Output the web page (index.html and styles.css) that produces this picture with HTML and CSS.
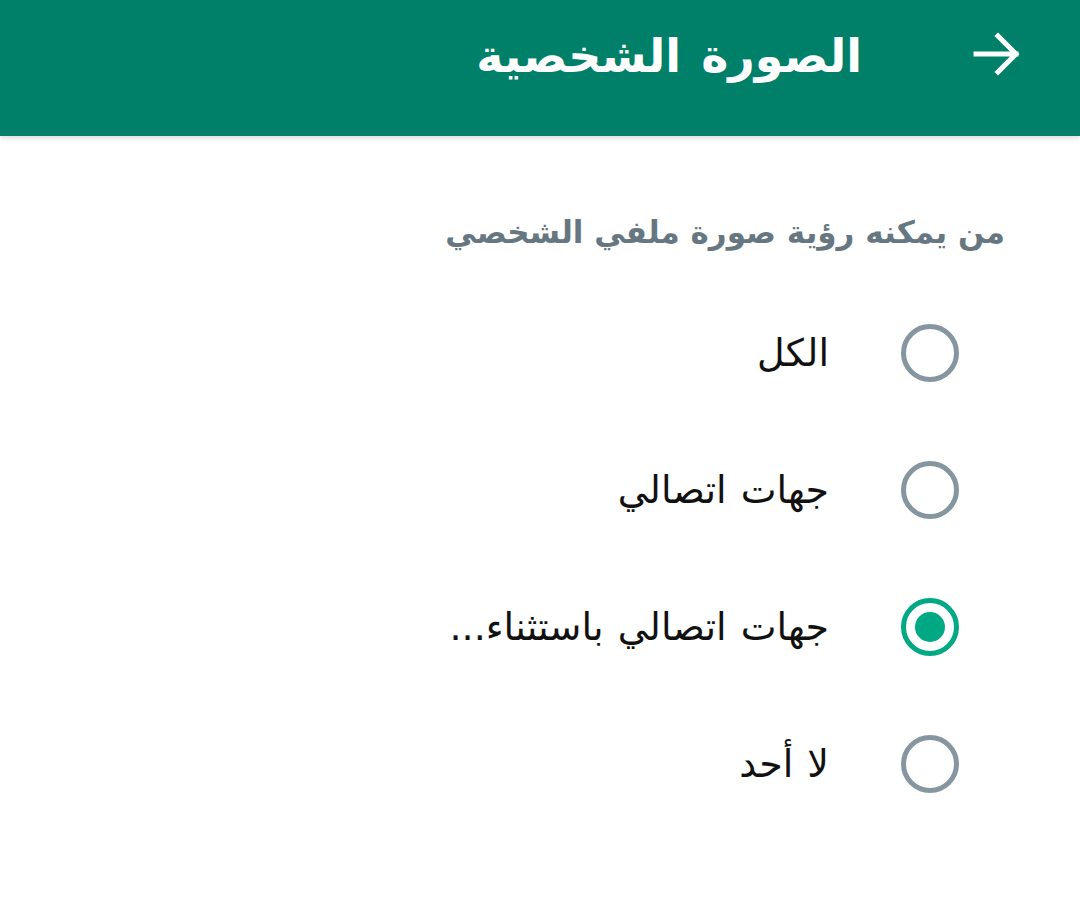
FILE: index.html
```html
<!DOCTYPE html>
<html lang="ar" dir="rtl">
<head>
<meta charset="utf-8">
<link rel="stylesheet" href="styles.css">
</head>
<body>
<header class="bar">
  <svg class="back" viewBox="0 0 48 48" width="48" height="48">
    <path d="M4 24 H44 M26 6 L44 24 L26 42" fill="none" stroke="#fff" stroke-width="5" stroke-linecap="square"/>
  </svg>
  <h1 class="title">الصورة الشخصية</h1>
</header>
<main class="content">
  <p class="subtitle">من يمكنه رؤية صورة ملفي الشخصي</p>
  <ul class="options">
    <li class="option"><span class="radio"></span><span class="label">الكل</span></li>
    <li class="option"><span class="radio"></span><span class="label">جهات اتصالي</span></li>
    <li class="option"><span class="radio checked"></span><span class="label">جهات اتصالي باستثناء...</span></li>
    <li class="option"><span class="radio"></span><span class="label">لا أحد</span></li>
  </ul>
</main>
</body>
</html>
```
FILE: styles.css
```css
html, body {
  margin: 0;
  padding: 0;
  background: #fff;
  font-family: "DejaVu Sans", sans-serif;
}
.bar {
  height: 136px;
  background: #008069;
  display: flex;
  align-items: center;
  padding-right: 60px;
  gap: 110px;
  box-shadow: 0 3px 4px rgba(0,0,0,0.12);
  position: relative;
}
.back {
  flex: none;
  margin-top: -28px;
}
.title {
  margin: 0;
  margin-top: -24px;
  color: #fff;
  font-size: 46px;
  font-weight: bold;
  word-spacing: 4px;
}
.content {
  padding-top: 66px;
}
.subtitle {
  margin: 0;
  padding-right: 75px;
  color: #667781;
  font-size: 31px;
  font-weight: bold;
  line-height: 60px;
}
.options {
  list-style: none;
  margin: 0;
  padding: 22px 121px 0 0;
}
.option {
  height: 137px;
  display: flex;
  align-items: center;
  gap: 72px;
}
.radio {
  flex: none;
  width: 48px;
  height: 48px;
  border: 5px solid #8696a0;
  border-radius: 50%;
  display: flex;
  align-items: center;
  justify-content: center;
}
.radio.checked {
  border-color: #00a884;
}
.radio.checked::after {
  content: "";
  width: 30px;
  height: 30px;
  border-radius: 50%;
  background: #00a884;
}
.label {
  font-size: 38px;
  color: #111;
  word-spacing: 2px;
}
```
